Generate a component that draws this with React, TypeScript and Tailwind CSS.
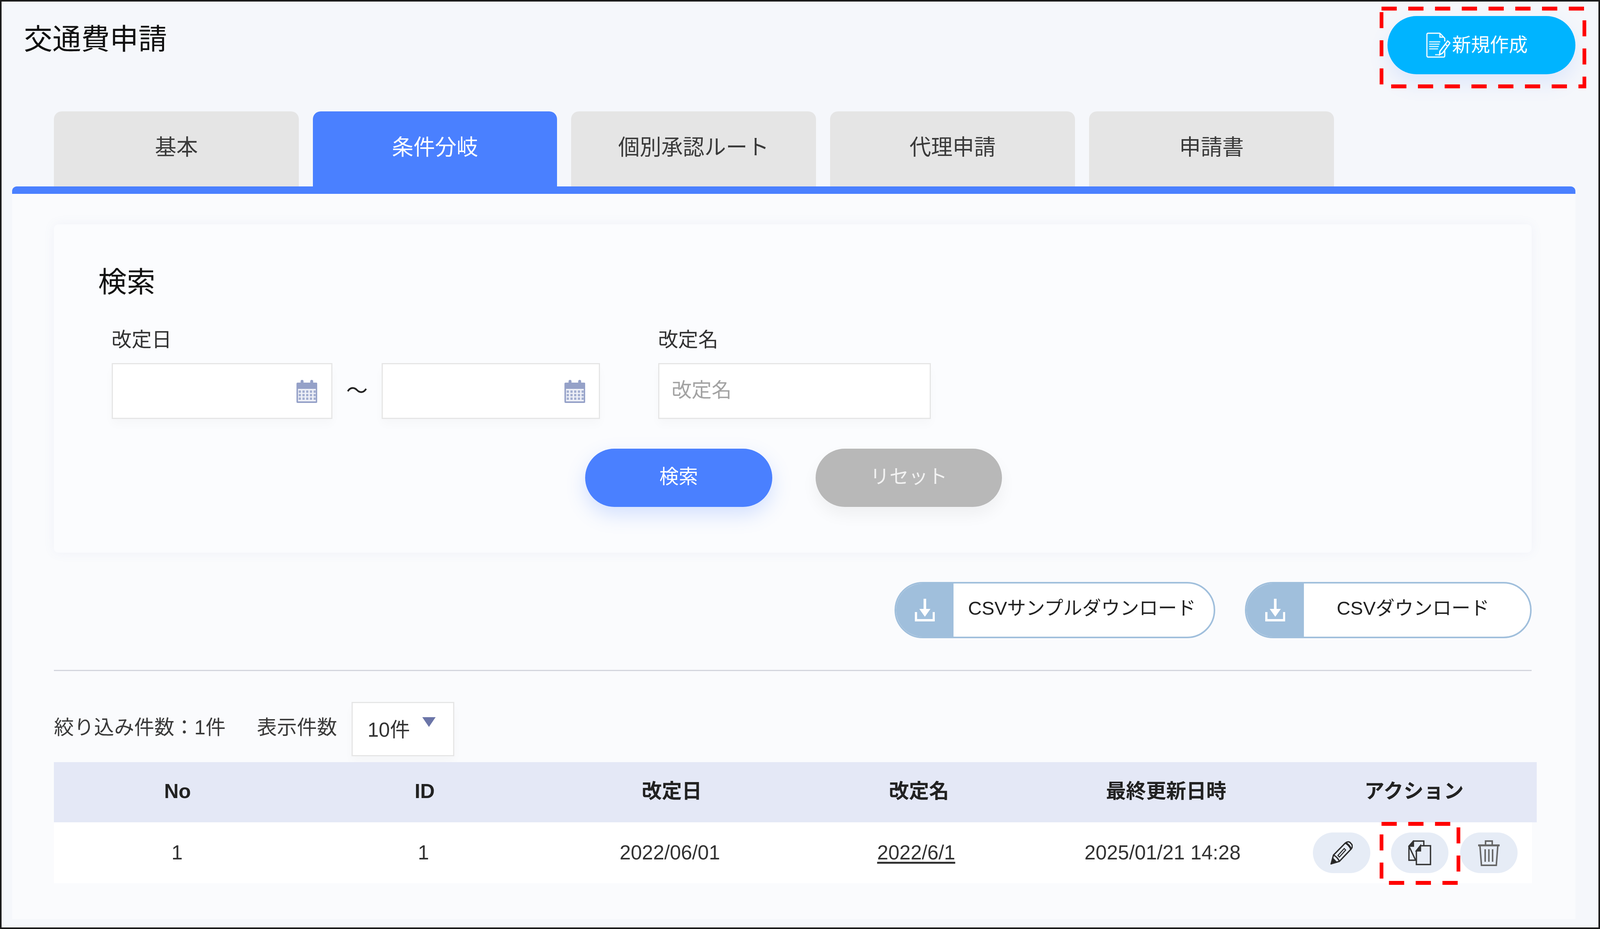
import React from "react";

const CalendarIcon = () => (
  <svg viewBox="0 0 56 60" preserveAspectRatio="none" className="h-[60px] w-[1.301vw] shrink-0">
    <path d="M3 8h8V5a4 4 0 0 1 8 0v3h18V5a4 4 0 0 1 8 0v3h8a3 3 0 0 1 3 3v46a3 3 0 0 1-3 3H3a3 3 0 0 1-3-3V11a3 3 0 0 1 3-3z" fill="#95a1c8" />
    <rect x="4" y="24" width="48" height="32" fill="#eef0f7" />
    <g fill="#a3aed0">
      {[28, 37, 46].map((y) =>
        [7, 17, 27, 37, 47].map((x) => <rect key={`${x}-${y}`} x={x - 1} y={y} width="6" height="6" />)
      )}
    </g>
  </svg>
);

const DownloadIcon = () => (
  <svg viewBox="0 0 54 59" preserveAspectRatio="none" fill="none" stroke="#fff" className="h-[59px] w-[1.254vw]">
    <path d="M27 0v32" strokeWidth="7" />
    <path d="M12 26h30L27 46z" fill="#fff" stroke="none" />
    <path d="M3 34v21h48V34" strokeWidth="6" />
  </svg>
);

const NewDocIcon = () => (
  <svg viewBox="0 0 66 65" preserveAspectRatio="none" fill="none" stroke="#fff" className="h-[65px] w-[1.533vw] shrink-0">
    <path d="M37 2H5a3 3 0 0 0-3 3v55a3 3 0 0 0 3 3h42a3 3 0 0 0 3-3V44M37 2l13 13v8M37 2v10h11" strokeWidth="3" />
    <path d="M8 24h30M8 30h28M8 36h26M8 42h24M24 57h14" strokeWidth="3" opacity="0.85" />
    <path d="M58 22l6 5-20 26-8 4 1-9z" strokeWidth="3.4" />
    <path d="M51 30l7 5" strokeWidth="3" />
  </svg>
);

const PencilIcon = () => (
  <svg viewBox="0 0 60 60" preserveAspectRatio="none" fill="none" stroke="#2a2a2a" strokeWidth="3.4" className="h-[60px] w-[1.393vw]">
    <path d="M2 58l6-22L40 5q6-5 12-2l5 5q4 6-1 12L24 52z" />
    <path d="M2 58l4-14 10 10z" fill="#222" />
    <path d="M8 36c6 2 14 10 16 16" />
    <path d="M41 5c5 2 12 9 14 15" strokeWidth="5" />
    <path d="M20 37l17-18 4 4-17 18z" strokeWidth="2.6" />
  </svg>
);

const CopyIcon = () => (
  <svg viewBox="0 0 62 64" preserveAspectRatio="none" fill="none" stroke="#333" strokeWidth="3.6" className="h-[64px] w-[1.44vw]">
    <path d="M14 2h28v11M20 51H2V15z" />
    <path d="M14 2L2 15h12z" fill="#333" />
    <path d="M33 14h27v48H22V27z" fill="#e6ecf6" />
    <path d="M33 14L22 27h11z" fill="#333" />
  </svg>
);

const TrashIcon = () => (
  <svg viewBox="0 0 60 67" preserveAspectRatio="none" fill="none" stroke="#666" className="h-[67px] w-[1.393vw]">
    <path d="M21 12V3h18v9" strokeWidth="4" />
    <path d="M1 14h58" strokeWidth="5" />
    <path d="M6 15l4 50h40l4-50" strokeWidth="4" />
    <path d="M20 24v32M30 24v32M40 24v32" strokeWidth="4" />
  </svg>
);

const Tab = ({ label, active }: { label: string; active?: boolean }) => (
  <div
    className={
      active
        ? "flex w-[15.258vw] items-center justify-center rounded-t-[20px] bg-[#4a80ff] pb-[8px] text-[1.347vw] text-white"
        : "flex w-[15.304vw] items-center justify-center rounded-t-[20px] bg-[#e5e5e5] pb-[8px] text-[1.347vw] text-[#3a3a3a]"
    }
  >
    {label}
  </div>
);

const DateInput = ({ wide }: { wide?: boolean }) => (
  <div
    className={
      wide
        ? "flex h-[143px] w-[13.795vw] items-center justify-end border-[3px] border-[#e6e6e6] bg-white pr-[0.859vw] shadow-[0_14px_24px_rgba(0,0,0,0.025)]"
        : "flex h-[143px] w-[13.655vw] items-center justify-end border-[3px] border-[#e6e6e6] bg-white pr-[0.859vw] shadow-[0_14px_24px_rgba(0,0,0,0.025)]"
    }
  >
    <CalendarIcon />
  </div>
);

const CsvButton = ({ label, center }: { label: string; center?: boolean }) => (
  <div
    className={
      center
        ? "flex h-[144px] w-[17.928vw] overflow-hidden rounded-full border-[4px] border-[#a0bfdc] bg-white"
        : "flex h-[144px] w-[20.042vw] overflow-hidden rounded-full border-[4px] border-[#a0bfdc] bg-white"
    }
  >
    <div className="flex w-[3.6vw] shrink-0 items-center justify-center bg-[#a0bfdc]">
      <DownloadIcon />
    </div>
    <div
      className={
        center
          ? "flex flex-1 items-start justify-center pt-[28px] pr-[0.5vw] text-[1.184vw] leading-[70px] text-[#222]"
          : "flex flex-1 items-start pt-[28px] pl-[0.906vw] text-[1.184vw] leading-[70px] text-[#222]"
      }
    >
      {label}
    </div>
  </div>
);

const ActionButton = ({ children }: { children: React.ReactNode }) => (
  <div className="flex h-[104px] w-[3.6vw] items-center justify-center rounded-full bg-[#e6ecf6]">{children}</div>
);

export default function App() {
  return (
    <div className="relative flex h-[2377px] w-screen flex-col overflow-hidden border-[4px] border-[#1c1c1c] bg-[#f5f7fb] font-['Liberation_Sans','Noto_Sans_CJK_JP',sans-serif]">
      <header className="flex h-[281px] shrink-0 items-start justify-between pt-[37px] pr-[1.44vw] pl-[1.393vw]">
        <h1 className="mt-[22px] text-[1.79vw] leading-[76px] font-normal text-[#111]">交通費申請</h1>
        <button className="flex h-[149px] w-[11.751vw] items-center justify-center gap-[0.09vw] rounded-full bg-[#00b4ff] pr-[0.56vw] text-[1.184vw] text-white shadow-[0_24px_50px_rgba(74,128,255,0.13)]">
          <NewDocIcon />
          <span>新規作成</span>
        </button>
      </header>

      <nav className="flex h-[192px] shrink-0 gap-[0.882vw] pl-[3.275vw]">
        <Tab label="基本" />
        <Tab label="条件分岐" active />
        <Tab label="個別承認ルート" />
        <Tab label="代理申請" />
        <Tab label="申請書" />
      </nav>

      <main className="ml-[0.65vw] flex h-[1875px] w-[97.724vw] shrink-0 flex-col rounded-t-[12px] border-t-[19px] border-[#4a80ff] bg-[#fafbfd] pl-[2.624vw]">
        <section className="mt-[78px] flex h-[840px] w-[92.359vw] shrink-0 flex-col rounded-[12px] bg-[#fbfcfe] pt-[110px] pl-[2.764vw] shadow-[0_0_30px_rgba(100,120,180,0.07)]">
          <h2 className="text-[1.788vw] leading-[76px] font-normal text-[#111]">検索</h2>
          <div className="mt-[83px] ml-[0.836vw] flex items-end">
            <div className="flex flex-col gap-[32px]">
              <label className="text-[1.254vw] leading-[54px] text-[#333]">改定日</label>
              <DateInput wide />
            </div>
            <div className="flex h-[143px] w-[3.089vw] items-center justify-center text-[1.347vw] text-[#222]">～</div>
            <DateInput />
            <div className="ml-[3.623vw] flex flex-col gap-[32px]">
              <label className="text-[1.254vw] leading-[54px] text-[#333]">改定名</label>
              <div className="flex h-[143px] w-[17.046vw] items-center border-[3px] border-[#e6e6e6] bg-white pb-[4px] pl-[0.766vw] text-[1.254vw] text-[#a3a3a3] shadow-[0_14px_24px_rgba(0,0,0,0.025)]">
                改定名
              </div>
            </div>
          </div>
          <div className="mt-[76px] -ml-[2.764vw] flex justify-center gap-[2.717vw] pl-[0.093vw]">
            <button className="flex h-[149px] w-[11.681vw] items-center justify-center rounded-full bg-[#4a80ff] pb-[4px] text-[1.208vw] text-white shadow-[0_20px_50px_rgba(74,128,255,0.22)]">
              検索
            </button>
            <button className="flex h-[149px] w-[11.635vw] items-center justify-center rounded-full bg-[#b8b8b8] pb-[4px] text-[1.208vw] text-[#f2f2f2] shadow-[0_20px_40px_rgba(0,0,0,0.05)]">
              リセット
            </button>
          </div>
        </section>

        <div className="mt-[75px] flex w-[92.359vw] shrink-0 justify-end gap-[1.858vw]">
          <CsvButton label="CSVサンプルダウンロード" />
          <CsvButton label="CSVダウンロード" center />
        </div>

        <hr className="mt-[81px] h-[3px] w-[92.359vw] shrink-0 border-0 bg-[#d3d5dd]" />

        <div className="mt-[79px] flex h-[139px] shrink-0 items-center text-[1.254vw] text-[#3a3a3a]">
          <span className="mb-[8px]">絞り込み件数：1件</span>
          <span className="mb-[8px] ml-[1.95vw]">表示件数</span>
          <div className="ml-[0.906vw] flex h-[139px] w-[6.433vw] items-start border-[3px] border-[#e6e6e6] bg-white pt-[30px] pl-[0.929vw] shadow-[0_14px_24px_rgba(0,0,0,0.025)]">
            <span className="text-[#333]">10件</span>
            <svg viewBox="0 0 36 25" preserveAspectRatio="none" className="mt-[6px] ml-[0.766vw] h-[25px] w-[0.836vw]">
              <path d="M0 0h36L18 25z" fill="#6b75a8" />
            </svg>
          </div>
        </div>

        <div className="mt-[15px] grid h-[154px] w-[92.684vw] shrink-0 grid-cols-6 items-center justify-items-center bg-[#e4e8f6] pb-[4px] text-[1.254vw] font-bold text-[#222]">
          <div>No</div>
          <div>ID</div>
          <div>改定日</div>
          <div>改定名</div>
          <div>最終更新日時</div>
          <div className="pl-[0.093vw]">アクション</div>
        </div>
        <div className="grid h-[156px] w-[92.383vw] shrink-0 grid-cols-6 items-center justify-items-center bg-white text-[1.254vw] text-[#333]">
          <div>1</div>
          <div>1</div>
          <div>2022/06/01</div>
          <div className="underline underline-offset-[6px]">2022/6/1</div>
          <div>2025/01/21 14:28</div>
          <div className="col-start-6 flex justify-self-start pl-[1.7vw]">
            <ActionButton><PencilIcon /></ActionButton>
            <div className="ml-[1.277vw]"><ActionButton><CopyIcon /></ActionButton></div>
            <div className="ml-[0.72vw]"><ActionButton><TrashIcon /></ActionButton></div>
          </div>
        </div>
      </main>

      <svg viewBox="0 0 4306 2377" preserveAspectRatio="none" fill="none" className="pointer-events-none absolute top-[-4px] left-[-4px] h-[2377px] w-screen">
        <rect x="3718" y="22" width="546" height="199" stroke="#ff0000" strokeWidth="10" strokeDasharray="41 31" />
        <rect x="3718" y="2108" width="207" height="151" stroke="#ff0000" strokeWidth="10" strokeDasharray="41 31" />
      </svg>
    </div>
  );
}
